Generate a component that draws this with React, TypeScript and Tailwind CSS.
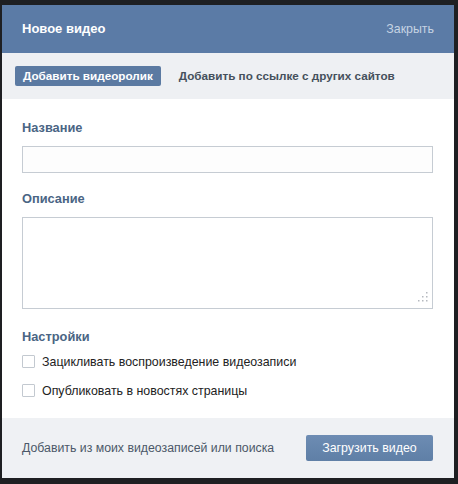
import React from 'react';

/* ---------- atoms ---------- */
const Label = ({ children }: { children: React.ReactNode }) => (
  <div className="text-[12.8px] font-bold text-[#4a6584] leading-none">{children}</div>
);

const Check = ({ label }: { label: string }) => (
  <label className="flex items-center gap-[7px] h-[13px]">
    <span className="w-[13px] h-[13px] border border-[#c3c9d0] bg-white rounded-[1px]" />
    <span className="text-[12.4px] text-[#222]">{label}</span>
  </label>
);

/* ---------- main ---------- */
export default function App() {
  return (
    <div
      className="w-[458px] h-[484px] bg-[#1e1f22] pt-[5px] pl-[2px] overflow-hidden"
      style={{ fontFamily: '"Liberation Sans", Arial, sans-serif' }}
    >
      <div className="w-[452px] h-[473px] flex flex-col bg-white">
        {/* header */}
        <div className="h-[48px] bg-[#5b7ba6] flex items-center justify-between pl-[20px] pr-[20px] shrink-0">
          <span className="text-[13px] font-bold text-white">Новое видео</span>
          <span className="text-[12.4px] text-[#c6d3e3]">Закрыть</span>
        </div>

        {/* tabs */}
        <div className="h-[46px] bg-[#eef0f3] flex items-center pl-[13px] gap-[18px] shrink-0">
          <span className="h-[20px] px-[8px] flex items-center bg-[#5b7aa2] rounded-[2px] text-[11.7px] font-bold text-white">
            Добавить видеоролик
          </span>
          <span className="text-[11.7px] font-bold text-[#45505c]">
            Добавить по ссылке с других сайтов
          </span>
        </div>

        {/* body */}
        <div className="flex-1 pl-[20px] pr-[21px] pt-[23px] flex flex-col">
          <Label>Название</Label>
          <div className="mt-[11px] h-[27px] border border-[#c6ccd3] bg-[#fdfdfd]" />
          <div className="mt-[20px]">
            <Label>Описание</Label>
          </div>
          <div className="mt-[11px] h-[92px] border border-[#c6ccd3] bg-white flex items-end justify-end pr-[4px] pb-[6px]">
            <svg width="10" height="10" viewBox="0 0 10 10">
              <g fill="#b5b9bf">
                <rect x="8" y="0" width="1.5" height="1.5" />
                <rect x="4" y="4" width="1.5" height="1.5" />
                <rect x="8" y="4" width="1.5" height="1.5" />
                <rect x="0" y="8" width="1.5" height="1.5" />
                <rect x="4" y="8" width="1.5" height="1.5" />
                <rect x="8" y="8" width="1.5" height="1.5" />
              </g>
            </svg>
          </div>
          <div className="mt-[22px]">
            <Label>Настройки</Label>
          </div>
          <div className="mt-[12px] flex flex-col gap-[16px]">
            <Check label="Зацикливать воспроизведение видеозаписи" />
            <Check label="Опубликовать в новостях страницы" />
          </div>
        </div>

        {/* footer */}
        <div className="h-[60px] bg-[#eff1f4] flex items-center justify-between pl-[20px] pr-[21px] shrink-0">
          <span className="text-[12.3px] text-[#4b5868]">Добавить из моих видеозаписей или поиска</span>
          <button className="w-[127px] h-[26px] bg-gradient-to-b from-[#6d8cb3] to-[#5f7fa6] rounded-[2px] text-[12.4px] text-white">
            Загрузить видео
          </button>
        </div>
      </div>
    </div>
  );
}
